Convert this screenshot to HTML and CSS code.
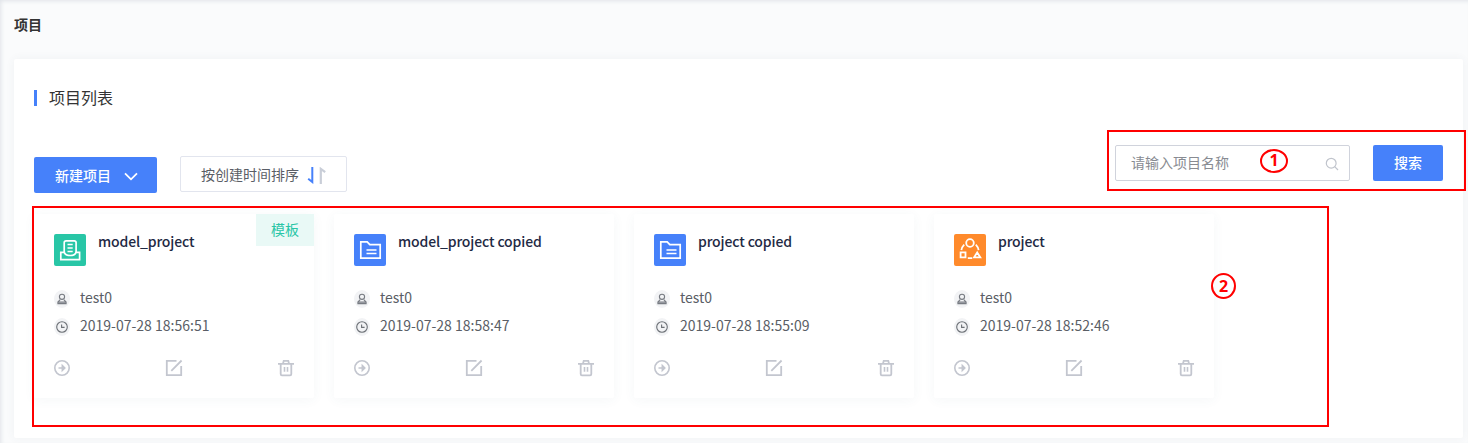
FILE: index.html
```
<!DOCTYPE html>
<html lang="zh-CN">
<head>
<meta charset="utf-8">
<title>项目</title>
<link rel="stylesheet" href="styles.css">
</head>
<body>
<svg class="sprite" width="0" height="0">
  <defs>
    <symbol id="folder" viewBox="0 0 32 32"><path d="M6.8 7.8h6.4l2.6 2.8h10.4v13.6H6.8z" fill="none" stroke="#fff" stroke-width="1.7"/><path d="M12.5 16h10M12.5 19.5h10" stroke="#fff" stroke-width="1.5"/></symbol>
    <symbol id="user" viewBox="0 0 16 18"><ellipse cx="8" cy="9" rx="8" ry="9" fill="#f2f3f5"/><circle cx="8" cy="6.8" r="2.6" fill="none" stroke="#777b82" stroke-width="1.1"/><path d="M6.2 9.6L3.9 12v1.6h8.2V12L9.8 9.6M4 12.1h8" fill="none" stroke="#777b82" stroke-width="1.1"/></symbol>
    <symbol id="clock" viewBox="0 0 16 18"><ellipse cx="8" cy="9" rx="8" ry="9" fill="#f2f3f5"/><circle cx="8" cy="9" r="5.3" fill="none" stroke="#6c7076" stroke-width="1.1"/><path d="M7.6 6.4v3h3" fill="none" stroke="#6c7076" stroke-width="1.1"/></symbol>
    <symbol id="enter" viewBox="0 0 18 18"><circle cx="9" cy="9" r="7.2" fill="none" stroke="#c3c6cf" stroke-width="1.6"/><path d="M5.5 9h5.5M9.2 6.2L12 9l-2.8 2.8z" fill="#c3c6cf" stroke="#c3c6cf" stroke-width="1.3"/></symbol>
    <symbol id="edit" viewBox="0 0 18 18"><path d="M11.5 1.8H1.8v14.4h14.4V7M6.3 11.8L16.6 1.5" fill="none" stroke="#c3c6cf" stroke-width="1.8"/></symbol>
    <symbol id="trash" viewBox="0 0 18 18"><path d="M1 4.8h16M6 4.6l.7-2.8h4.6l.7 2.8M3.7 4.8v10.2q0 1.3 1.2 1.3h8.2q1.2 0 1.2-1.3V4.8" fill="none" stroke="#c3c6cf" stroke-width="1.8"/><path d="M7.5 8v4.8M10.5 8v4.8" stroke="#c3c6cf" stroke-width="1.6"/></symbol>
  </defs>
</svg>
<header class="page-header">项目</header>
<main class="panel">
  <h2 class="section-title"><span>项目列表</span></h2>
  <div class="toolbar">
    <button class="btn btn-create"><span>新建项目</span><svg width="14" height="9" viewBox="0 0 14 9"><path d="M1 1.3l6 6 6-6" fill="none" stroke="#fff" stroke-width="1.8"/></svg></button>
    <button class="btn-sort"><span>按创建时间排序</span><svg width="20" height="17" viewBox="0 0 20 17"><path d="M5.3 0v15L1.2 11.8" fill="none" stroke="#4681fa" stroke-width="2"/><path d="M13.8 17V1.9L18.2 5.2" fill="none" stroke="#c9ced8" stroke-width="2.2"/></svg></button>
    <div class="search">
      <div class="search-input"><span>请输入项目名称</span><svg width="14" height="14" viewBox="0 0 14 14"><circle cx="6.2" cy="6.2" r="4.9" fill="none" stroke="#c0c4cc" stroke-width="1.2"/><path d="M9.7 9.7l3.3 3.3" stroke="#c0c4cc" stroke-width="1.2"/></svg></div>
      <button class="btn btn-search"><span>搜索</span></button>
    </div>
  </div>
  <section class="cards">
    <article class="card">
      <span class="tag">模板</span>
      <div class="card-head"><svg class="logo green" viewBox="0 0 32 32"><path d="M10.2 17.3V8.7q0-1.9 1.9-1.9h8.1q1.9 0 1.9 1.9v8.6c0 2.7-2.6 4.2-5.9 4.2s-6-1.5-6-4.2zM10 18.4H6.8v7.2h18.8v-7.2h-3.4" fill="none" stroke="#fff" stroke-width="1.7"/><path d="M13.5 10.6h5.2M13.5 14h5.2M13.5 17.4h5.2" stroke="#fff" stroke-width="1.5"/></svg><h3>model_project</h3></div>
      <p class="meta"><svg><use href="#user"/></svg><span>test0</span></p>
      <p class="meta"><svg><use href="#clock"/></svg><span>2019-07-28 18:56:51</span></p>
      <div class="actions"><svg><use href="#enter"/></svg><svg><use href="#edit"/></svg><svg><use href="#trash"/></svg></div>
    </article>
    <article class="card">
      <div class="card-head"><svg class="logo blue"><use href="#folder"/></svg><h3>model_project copied</h3></div>
      <p class="meta"><svg><use href="#user"/></svg><span>test0</span></p>
      <p class="meta"><svg><use href="#clock"/></svg><span>2019-07-28 18:58:47</span></p>
      <div class="actions"><svg><use href="#enter"/></svg><svg><use href="#edit"/></svg><svg><use href="#trash"/></svg></div>
    </article>
    <article class="card">
      <div class="card-head"><svg class="logo blue"><use href="#folder"/></svg><h3>project copied</h3></div>
      <p class="meta"><svg><use href="#user"/></svg><span>test0</span></p>
      <p class="meta"><svg><use href="#clock"/></svg><span>2019-07-28 18:55:09</span></p>
      <div class="actions"><svg><use href="#enter"/></svg><svg><use href="#edit"/></svg><svg><use href="#trash"/></svg></div>
    </article>
    <article class="card">
      <div class="card-head"><svg class="logo orange" viewBox="0 0 32 32"><g fill="none" stroke="#fff" stroke-width="1.8"><circle cx="16" cy="9" r="3.8"/><path d="M6.6 18.4h4.9v4.9H6.6zM23.2 18.5l3.1 4.8h-6.2zM10.2 10.6Q7.8 13 7.4 16.2M21.8 10.6Q24.2 13 24.6 16.2M13.8 24.2h4.4"/></g></svg><h3>project</h3></div>
      <p class="meta"><svg><use href="#user"/></svg><span>test0</span></p>
      <p class="meta"><svg><use href="#clock"/></svg><span>2019-07-28 18:52:46</span></p>
      <div class="actions"><svg><use href="#enter"/></svg><svg><use href="#edit"/></svg><svg><use href="#trash"/></svg></div>
    </article>
  </section>
</main>
<div class="callout callout-search"></div>
<div class="callout callout-cards"></div>
<span class="num num-one">1</span>
<span class="num num-two">2</span>
</body>
</html>
```
FILE: styles.css
```
* { box-sizing: border-box; }
body {
  margin: 0;
  height: 443px;
  position: relative;
  overflow: hidden;
  padding: 0 5px 0 14px;
  background: #fafbfc;
  box-shadow: inset 2px 2px 4px -1px #e0e3e8;
  font: 14px/20px "Noto Sans CJK SC", sans-serif;
  color: #5a5e66;
}
h2, h3, p { margin: 0; }
button { font: inherit; padding: 0; }
.sprite { position: absolute; }
.page-header {
  height: 59px;
  padding-top: 14px;
  font-weight: 700;
  color: #333;
}
.panel {
  height: 379px;
  padding: 29px 20px 0;
  background: #fff;
  border-radius: 2px;
  box-shadow: 0 0 10px rgba(60, 80, 110, .06);
}
.section-title {
  height: 20px;
  display: flex;
  align-items: center;
  font-size: 16px;
  font-weight: 400;
  color: #333;
}
.section-title span { padding-bottom: 2px; }
.section-title::before {
  content: "";
  width: 3px;
  height: 16px;
  margin-right: 12px;
  background: #4681fa;
}
.toolbar {
  display: flex;
  align-items: flex-start;
  margin-top: 37px;
}
.toolbar span { padding-bottom: 2px; }
.btn {
  height: 36px;
  border: 0;
  border-radius: 2px;
  background: #4681fa;
  color: #fff;
  font-weight: 500;
}
.btn-create {
  width: 123px;
  margin: 12px 23px 0 0;
  padding-left: 21px;
  display: flex;
  align-items: center;
  gap: 13px;
}
.btn-create span { padding-bottom: 1px; }
.btn-create svg { margin-top: 3px; }
.btn-sort {
  width: 167px;
  height: 36px;
  margin-top: 11px;
  padding-left: 20px;
  display: flex;
  align-items: center;
  gap: 8px;
  border: 1px solid #e2e5ee;
  border-radius: 2px;
  background: #fff;
  color: #5a5e66;
}
.btn-sort span { padding-bottom: 0; }
.btn-sort svg { margin-top: 2px; }
.search { display: flex; gap: 23px; margin-left: auto; }
.search-input {
  width: 235px;
  height: 36px;
  padding: 0 10px 0 15px;
  display: flex;
  align-items: center;
  justify-content: space-between;
  border: 1px solid #d0d3dc;
  border-radius: 2px;
  color: #888b92;
}
.search-input svg { margin-top: 1px; }
.btn-search { width: 70px; display: flex; align-items: center; justify-content: center; }
.cards { display: flex; gap: 20px; margin-top: 21px; }
.card {
  position: relative;
  width: 280px;
  height: 184px;
  padding: 20px;
  background: #fff;
  border-radius: 2px;
  box-shadow: 0 2px 12px rgba(60, 90, 110, .05);
}
.card-head { display: flex; gap: 12px; height: 54px; }
.card-head h3 {
  margin-top: -3px;
  font-size: 14px;
  line-height: 20px;
  font-weight: 500;
  letter-spacing: -.14px;
  color: #1f2a44;
}
.logo { width: 32px; height: 32px; border-radius: 2px; }
.green { background: #28c6a6; }
.blue { background: #4681fa; }
.orange { background: #ff8a2b; }
.tag {
  position: absolute;
  top: 0;
  right: 0;
  width: 58px;
  height: 32px;
  line-height: 30px;
  text-align: center;
  background: #e9f9f6;
  color: #28c6a6;
}
.meta { display: flex; align-items: center; gap: 10px; height: 20px; margin-bottom: 8px; }
.meta span { padding-bottom: 2px; }
.meta svg { width: 16px; height: 18px; margin-top: 2px; }
.actions { display: flex; justify-content: space-between; margin: 23px -1px 0; }
.actions svg { width: 18px; height: 18px; }
.callout { position: absolute; border: 2px solid #f00; }
.callout-search { left: 1107px; top: 130px; width: 359px; height: 61px; }
.callout-cards { left: 32px; top: 206px; width: 1297px; height: 221px; }
.num {
  position: absolute;
  border: 2px solid #f00;
  border-radius: 50%;
  color: #f00;
  font: 700 16px "Open Sans", sans-serif;
  text-align: center;
}
.num-one { left: 1260px; top: 149px; width: 28px; height: 24px; line-height: 19px; }
.num-two { left: 1211px; top: 273px; width: 25px; height: 26px; line-height: 23px; }
```
